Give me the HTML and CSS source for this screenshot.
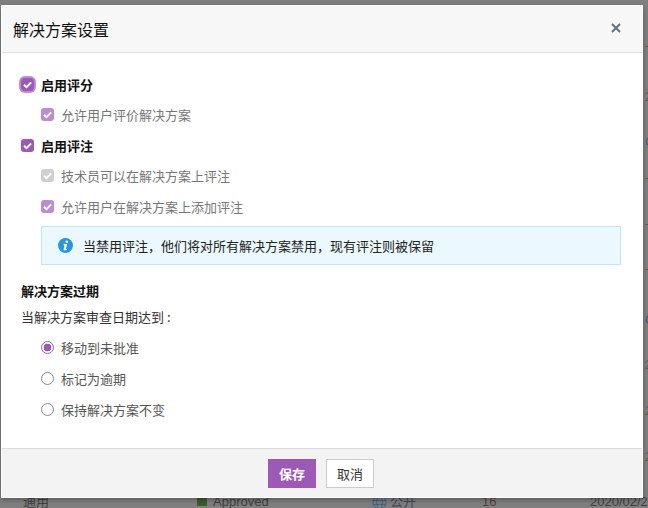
FILE: index.html
```html
<!DOCTYPE html>
<html lang="zh-CN">
<head>
<meta charset="utf-8">
<title>解决方案设置</title>
<link rel="stylesheet" href="styles.css">
</head>
<body>
<div class="backdrop">
  <div class="bg-row">
    <span class="bg-a">通用</span>
    <span class="bg-status"><i class="bg-sq"></i>Approved</span>
    <span class="bg-pub"><svg class="bg-globe" viewBox="0 0 16 16"><circle cx="8" cy="8" r="7"/><ellipse cx="8" cy="8" rx="3" ry="7"/><path d="M1 6h14M1 10h14"/></svg>公开</span>
    <span class="bg-num">16</span>
    <span class="bg-date">2020/02/2</span>
  </div>
  <div class="bg-frag f1">T</div>
  <div class="bg-frag f2">2</div>
  <div class="bg-frag f3">O</div>
  <div class="bg-frag f4">T</div>
  <div class="bg-frag f5">T</div>
  <div class="bg-frag f6">T</div>
  <div class="bg-frag f7">O</div>
  <div class="bg-frag f8">2</div>
  <div class="bg-frag f9">2</div>
  <div class="bg-frag f10">2</div>
</div>
<main class="modal">
  <header class="modal-head">
    <h1 class="modal-title">解决方案设置</h1>
    <svg class="close" viewBox="0 0 10 10"><path d="M1 1l8 8M9 1L1 9"/></svg>
  </header>
  <section class="modal-body">
    <label class="row row-main">
      <span class="cb cb-focus"><svg viewBox="0 0 13 13"><path d="M3 6.8l2.5 2.4L10.2 4.4"/></svg></span>
      <b>启用评分</b>
    </label>
    <label class="row row-sub">
      <span class="cb cb-light"><svg viewBox="0 0 13 13"><path d="M3 6.8l2.5 2.4L10.2 4.4"/></svg></span>
      <span>允许用户评价解决方案</span>
    </label>
    <label class="row row-main">
      <span class="cb"><svg viewBox="0 0 13 13"><path d="M3 6.8l2.5 2.4L10.2 4.4"/></svg></span>
      <b>启用评注</b>
    </label>
    <label class="row row-sub">
      <span class="cb cb-grey"><svg viewBox="0 0 13 13"><path d="M3 6.8l2.5 2.4L10.2 4.4"/></svg></span>
      <span>技术员可以在解决方案上评注</span>
    </label>
    <label class="row row-sub">
      <span class="cb cb-light"><svg viewBox="0 0 13 13"><path d="M3 6.8l2.5 2.4L10.2 4.4"/></svg></span>
      <span>允许用户在解决方案上添加评注</span>
    </label>
    <div class="notice">
      <svg class="info" viewBox="0 0 16 16"><circle cx="8" cy="8" r="8"/><circle class="info-mark" cx="9.4" cy="4" r="1.4"/><path class="info-mark" d="M6.2 6.4h3.6l-1.3 5.2h1.1l-.3 1.4H5.8l1.2-5.2H5.9z"/></svg>
      <span>当禁用评注，他们将对所有解决方案禁用，现有评注则被保留</span>
    </div>
    <h2 class="sec-title">解决方案过期</h2>
    <p class="sec-lead">当解决方案审查日期达到 :</p>
    <label class="row row-sub row-radio"><span class="rd rd-on"></span><span>移动到未批准</span></label>
    <label class="row row-sub row-radio"><span class="rd"></span><span>标记为逾期</span></label>
    <label class="row row-sub row-radio"><span class="rd"></span><span>保持解决方案不变</span></label>
  </section>
  <footer class="modal-foot">
    <button class="btn btn-save">保存</button>
    <button class="btn btn-cancel">取消</button>
  </footer>
</main>
</body>
</html>
```

FILE: styles.css
```css
* { box-sizing: border-box; }
html, body { margin: 0; height: 100%; }
body {
  position: relative;
  width: 648px;
  height: 508px;
  overflow: hidden;
  background: #7f7f7f;
  font-family: "Noto Sans CJK SC", "Liberation Sans", sans-serif;
  font-size: 13px;
  color: #222;
  padding: 5px 0 0 1px;
}
.backdrop { position: absolute; inset: 0; color: #3f3f3f; }
.bg-row { position: absolute; left: 0; top: 493px; width: 648px; height: 18px; font: 13px/18px "Liberation Sans", "Noto Sans CJK SC", sans-serif; }
.bg-row span, .bg-frag { position: absolute; white-space: nowrap; }
.bg-a { left: 23px; }
.bg-status { left: 197px; display: flex; align-items: center; gap: 6px; }
.bg-sq { width: 10px; height: 8px; background: #3d5a30; }
.bg-pub { left: 372px; display: flex; align-items: center; gap: 3px; color: #3f4a57; }
.bg-globe { width: 15px; height: 15px; fill: none; stroke: #3d5f86; }
.bg-num { left: 482px; color: #5a3f3f; }
.bg-date { left: 590px; }
.bg-frag { left: 645px; font: 13px/14px "Liberation Sans", sans-serif; color: #6a5a4a; }
.f1 { top: 44px; } .f2 { top: 90px; } .f3 { top: 135px; color: #3f5f80; } .f4 { top: 176px; } .f5 { top: 222px; } .f6 { top: 267px; } .f7 { top: 313px; color: #3f5f80; } .f8 { top: 358px; } .f9 { top: 404px; } .f10 { top: 450px; }

.modal {
  position: relative;
  display: flex;
  flex-direction: column;
  width: 642px;
  height: 493px;
  background: #fff;
  border: 1px solid #fff;
  box-shadow: 0 2px 5px rgba(0, 0, 0, .3);
}
.modal-head {
  flex: none;
  display: flex;
  align-items: center;
  justify-content: space-between;
  height: 47px;
  padding: 0 21px 0 11px;
  background: #f7f7f7;
  border-bottom: 1px solid #dedede;
}
.modal-title { margin: 0; font-size: 16px; font-weight: 400; color: #111; line-height: 22px; }
.close { width: 10px; height: 10px; margin-bottom: 2px; fill: none; stroke: #66727c; stroke-width: 2; }
.modal-body { flex: 1; padding: 21px 20px 0 18px; }
.row { display: flex; align-items: center; height: 20px; white-space: nowrap; }
.row-main { gap: 7px; margin-bottom: 10.6px; color: #111; }
.row-main b { font-weight: 700; }
.row-main .cb { margin-left: 1px; }
.row-sub { gap: 7px; margin-left: 21px; margin-bottom: 10.6px; color: #777; }
.cb {
  display: block;
  width: 13px;
  height: 13px;
  border-radius: 3px;
  background: #9c59b6;
  flex: none;
}
.cb svg { display: block; width: 13px; height: 13px; fill: none; stroke: #fff; stroke-width: 2; }
.cb-focus { box-shadow: 0 0 0 2px #b98fd0; border-radius: 4px; }
.cb-light { background: #bb8ccf; }
.cb-grey { background: #cfcfcf; }
.notice {
  display: flex;
  align-items: center;
  gap: 10px;
  height: 39px;
  margin: -1px 1px 0 21px;
  padding: 0 16px;
  background: #ebf8fd;
  border: 1px solid #bfe6f2;
  color: #222;
}
.info { width: 15px; height: 15px; flex: none; fill: #2a95d8; }
.info-mark { fill: #fff; }
.sec-title { margin: 16px 0 0 1px; font-size: 13px; font-weight: 700; line-height: 20px; color: #111; }
.sec-lead { margin: 6px 0 11px 1px; line-height: 20px; color: #333; }
.row-radio { color: #555; }
.rd { display: block; width: 13px; height: 13px; border: 1px solid #8a8a8a; border-radius: 50%; background: #fff; flex: none; }
.rd-on { border-color: #9c59b6; background: radial-gradient(circle, #9c59b6 0 3.6px, #fff 4.2px); }
.modal-foot {
  flex: none;
  display: flex;
  justify-content: center;
  gap: 10px;
  height: 49px;
  padding: 10px 2px 0 0;
  background: #f3f3f3;
  border-top: 1px solid #dcdcdc;
}
.btn { width: 48px; height: 29px; padding: 0; font: inherit; cursor: pointer; }
.btn-save { background: #9c59b6; border: 0; color: #fff; font-weight: 700; }
.btn-cancel { background: #fff; border: 1px solid #ccc; color: #333; }
```
